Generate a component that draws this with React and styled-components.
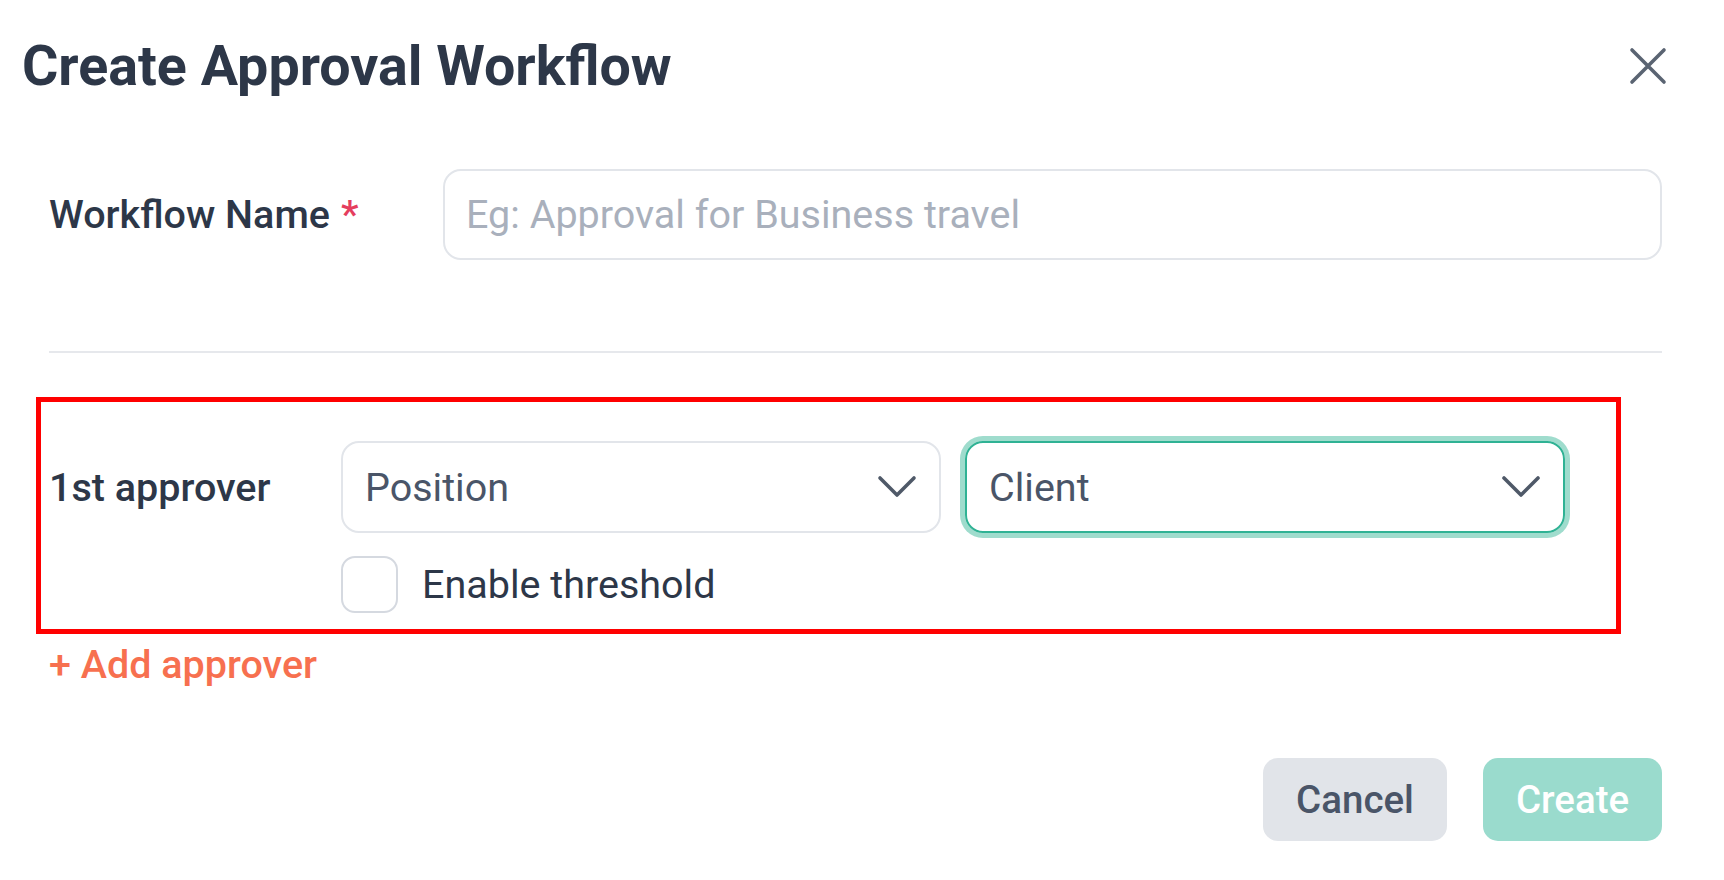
import React from 'react';
import styled, { createGlobalStyle } from 'styled-components';

const GlobalStyle = createGlobalStyle`
  body {
    margin: 0;
    background: #ffffff;
    font-family: Roboto, "Liberation Sans", sans-serif;
    color: #2d3748;
  }
`;

const Page = styled.div`
  width: 1724px;
  height: 880px;
  box-sizing: border-box;
  padding: 0 62px 0 49px;
  overflow: hidden;
`;

const Header = styled.div`
  height: 132px;
  margin: 0 -6px 0 -27px;
  display: flex;
  align-items: center;
  justify-content: space-between;
`;

const Title = styled.h1`
  margin: 0;
  font-size: 55.6px;
  line-height: 66px;
  font-weight: 700;
  color: #2d3748;
`;

const CloseButton = styled.button`
  width: 40px;
  height: 40px;
  padding: 0;
  border: none;
  background: none;
  display: flex;
  align-items: center;
  justify-content: center;
  color: #5a6472;
`;

const FieldRow = styled.div`
  margin-top: 37px;
  display: flex;
  align-items: center;
`;

const Label = styled.label`
  width: ${(p) => p.width}px;
  flex-shrink: 0;
  font-size: 39.5px;
  font-weight: 500;
  color: #2d3748;
`;

const Required = styled.span`
  color: #e53e5e;
  margin-left: 11px;
`;

const TextInput = styled.input`
  flex: 1;
  height: 91px;
  box-sizing: border-box;
  border: 2px solid #e2e5ea;
  border-radius: 18px;
  padding: 0 21px;
  font-family: inherit;
  font-size: 39.5px;
  color: #2d3748;
  outline: none;
  &::placeholder {
    color: #a9b0bc;
  }
`;

const Divider = styled.hr`
  margin: 91px 0 0;
  border: none;
  height: 2px;
  background: #e6e8ec;
`;

const ApproverBox = styled.section`
  margin: 44px 41px 0 -13px;
  border: 5px solid #ff0000;
  padding: 39px 0 16px 8px;
`;

const ApproverRow = styled.div`
  display: flex;
  align-items: center;
  gap: 24px;
`;

const ApproverLabel = styled.span`
  width: 268px;
  flex-shrink: 0;
  font-size: 39.5px;
  font-weight: 500;
  color: #2d3748;
`;

const Select = styled.div`
  width: 600px;
  height: 92px;
  box-sizing: border-box;
  border: 2px solid ${(p) => (p.focused ? '#2fb294' : '#e2e5ea')};
  box-shadow: ${(p) => (p.focused ? '0 0 0 5px #9fdccd' : 'none')};
  border-radius: 18px;
  padding: 0 22px 0 22px;
  display: flex;
  align-items: center;
  justify-content: space-between;
  font-size: 39.5px;
  color: #4a5568;
`;

const CheckRow = styled.div`
  margin: 23px 0 0 292px;
  display: flex;
  align-items: center;
  gap: 24px;
  font-size: 39.5px;
  color: #2d3748;
`;

const CheckBox = styled.span`
  width: 57px;
  height: 57px;
  box-sizing: border-box;
  border: 2px solid #d5d9e0;
  border-radius: 14px;
`;

const AddLink = styled.a`
  display: inline-block;
  margin-top: 8px;
  font-size: 39.5px;
  line-height: 46px;
  font-weight: 500;
  color: #f7704f;
`;

const Footer = styled.div`
  margin-top: 70px;
  display: flex;
  justify-content: flex-end;
  gap: 36px;
`;

const Button = styled.button`
  width: ${(p) => p.width}px;
  height: 83px;
  border: none;
  border-radius: 15px;
  font-family: inherit;
  font-size: 38.5px;
  font-weight: 500;
  background: ${(p) => (p.primary ? '#9adbcd' : '#e1e4e9')};
  color: ${(p) => (p.primary ? '#ffffff' : '#4a5568')};
`;

function Chevron() {
  return (
    <svg width="40" height="26" viewBox="0 0 40 26" fill="none">
      <path d="M3 4 L20 21 L37 4" stroke="#4f5968" strokeWidth="3.6" strokeLinecap="round" strokeLinejoin="round" />
    </svg>
  );
}

export default function App() {
  return (
    <Page>
      <GlobalStyle />
      <Header>
        <Title>Create Approval Workflow</Title>
        <CloseButton aria-label="Close">
          <svg width="38" height="38" viewBox="0 0 38 38" fill="none">
            <path d="M3 3 L35 35 M35 3 L3 35" stroke="currentColor" strokeWidth="3.6" strokeLinecap="round" />
          </svg>
        </CloseButton>
      </Header>

      <FieldRow>
        <Label width={394}>
          Workflow Name<Required>*</Required>
        </Label>
        <TextInput placeholder="Eg: Approval for Business travel" />
      </FieldRow>

      <Divider />

      <ApproverBox>
        <ApproverRow>
          <ApproverLabel>1st approver</ApproverLabel>
          <Select>
            Position
            <Chevron />
          </Select>
          <Select focused>
            Client
            <Chevron />
          </Select>
        </ApproverRow>
        <CheckRow>
          <CheckBox />
          Enable threshold
        </CheckRow>
      </ApproverBox>

      <AddLink>+ Add approver</AddLink>

      <Footer>
        <Button width={184}>Cancel</Button>
        <Button width={179} primary>
          Create
        </Button>
      </Footer>
    </Page>
  );
}
